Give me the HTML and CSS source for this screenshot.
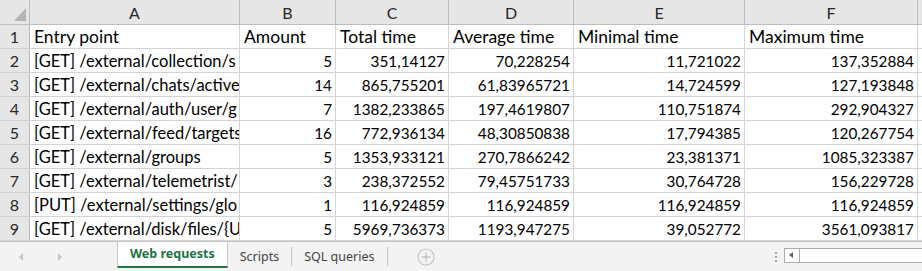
FILE: index.html
```html
<!DOCTYPE html>
<html lang="en">
<head>
    <meta charset="UTF-8">
    <title>Web requests</title>
    <link rel="stylesheet" href="styles.css">
</head>
<body>
    <div class="sheet">
        <div class="corner"><span class="corner-mark"></span></div>
        <div class="col-head">A</div>
        <div class="col-head">B</div>
        <div class="col-head">C</div>
        <div class="col-head">D</div>
        <div class="col-head">E</div>
        <div class="col-head">F</div>
        <div class="col-head edge"></div>

        <div class="row-head">1</div>
        <div class="cell">Entry point</div>
        <div class="cell">Amount</div>
        <div class="cell">Total time</div>
        <div class="cell">Average time</div>
        <div class="cell">Minimal time</div>
        <div class="cell">Maximum time</div>
        <div class="cell edge"></div>

        <div class="row-head">2</div>
        <div class="cell path">[GET] /external/collection/s</div>
        <div class="cell num">5</div>
        <div class="cell num">351,14127</div>
        <div class="cell num">70,228254</div>
        <div class="cell num">11,721022</div>
        <div class="cell num">137,352884</div>
        <div class="cell edge"></div>

        <div class="row-head">3</div>
        <div class="cell path">[GET] /external/chats/active</div>
        <div class="cell num">14</div>
        <div class="cell num">865,755201</div>
        <div class="cell num">61,83965721</div>
        <div class="cell num">14,724599</div>
        <div class="cell num">127,193848</div>
        <div class="cell edge"></div>

        <div class="row-head">4</div>
        <div class="cell path">[GET] /external/auth/user/g</div>
        <div class="cell num">7</div>
        <div class="cell num">1382,233865</div>
        <div class="cell num">197,4619807</div>
        <div class="cell num">110,751874</div>
        <div class="cell num">292,904327</div>
        <div class="cell edge"></div>

        <div class="row-head">5</div>
        <div class="cell path">[GET] /external/feed/targets</div>
        <div class="cell num">16</div>
        <div class="cell num">772,936134</div>
        <div class="cell num">48,30850838</div>
        <div class="cell num">17,794385</div>
        <div class="cell num">120,267754</div>
        <div class="cell edge"></div>

        <div class="row-head">6</div>
        <div class="cell path">[GET] /external/groups</div>
        <div class="cell num">5</div>
        <div class="cell num">1353,933121</div>
        <div class="cell num">270,7866242</div>
        <div class="cell num">23,381371</div>
        <div class="cell num">1085,323387</div>
        <div class="cell edge"></div>

        <div class="row-head">7</div>
        <div class="cell path">[GET] /external/telemetrist/</div>
        <div class="cell num">3</div>
        <div class="cell num">238,372552</div>
        <div class="cell num">79,45751733</div>
        <div class="cell num">30,764728</div>
        <div class="cell num">156,229728</div>
        <div class="cell edge"></div>

        <div class="row-head">8</div>
        <div class="cell path">[PUT] /external/settings/glo</div>
        <div class="cell num">1</div>
        <div class="cell num">116,924859</div>
        <div class="cell num">116,924859</div>
        <div class="cell num">116,924859</div>
        <div class="cell num">116,924859</div>
        <div class="cell edge"></div>

        <div class="row-head">9</div>
        <div class="cell path">[GET] /external/disk/files/{U</div>
        <div class="cell num">5</div>
        <div class="cell num">5969,736373</div>
        <div class="cell num">1193,947275</div>
        <div class="cell num">39,052772</div>
        <div class="cell num">3561,093817</div>
        <div class="cell edge"></div>
    </div>

    <footer class="tabbar">
        <div class="tab-nav">
            <span class="arrow left"></span>
            <span class="arrow right"></span>
        </div>
        <div class="tab active">Web requests</div>
        <div class="tab">Scripts</div>
        <div class="tab">SQL queries</div>
        <div class="add-sheet">
            <svg width="18" height="18" viewBox="0 0 18 18">
                <circle cx="9" cy="9" r="8" fill="none" stroke="#c3c3c3" stroke-width="1.2"/>
                <path d="M9 4.5v9M4.5 9h9" stroke="#c3c3c3" stroke-width="1.4"/>
            </svg>
        </div>
        <div class="spacer"></div>
        <div class="grip"><i></i><i></i><i></i></div>
        <div class="hscroll">
            <span class="hscroll-btn"></span>
        </div>
    </footer>
</body>
</html>
```

FILE: styles.css
```css
body {
    margin: 0;
    padding: 0;
    width: 922px;
    height: 271px;
    overflow: hidden;
    background-color: #fff;
    font-family: Lato, "Liberation Sans", sans-serif;
    color: #000;
}

.sheet {
    display: grid;
    grid-template-columns: 30px 210px 96px 113px 125px 171px 173px 4px;
    grid-template-rows: 25px repeat(9, 24px);
}

.sheet > div {
    box-sizing: border-box;
    overflow: hidden;
    white-space: nowrap;
}

.corner {
    position: relative;
    background-color: #e6e6e6;
    border-right: 1px solid #bdbdbd;
    border-bottom: 1px solid #bdbdbd;
}

.corner-mark {
    position: absolute;
    left: 14px;
    top: 8px;
    width: 12px;
    height: 13px;
    background-color: #b4b4b4;
    clip-path: polygon(100% 0, 100% 100%, 0 100%);
}

.col-head {
    background-color: #e6e6e6;
    border-right: 1px solid #bdbdbd;
    border-bottom: 1px solid #bdbdbd;
    color: #262626;
    font-size: 16px;
    text-align: center;
    line-height: 25px;
}

.row-head {
    background-color: #e6e6e6;
    border-right: 1px solid #bdbdbd;
    border-bottom: 1px solid #d0d0d0;
    color: #262626;
    font-size: 16px;
    text-align: center;
    line-height: 24px;
}

.cell {
    border-right: 1px solid #d4d4d4;
    border-bottom: 1px solid #d4d4d4;
    font-size: 17.5px;
    line-height: 22px;
    padding: 1px 3px 0 4px;
}

.cell.path {
    font-size: 16.5px;
    padding-right: 0;
}

.cell.num {
    font-size: 15.3px;
    text-align: right;
}

.edge {
    border-right: none;
}

.tabbar {
    display: flex;
    align-items: stretch;
    height: 30px;
    box-sizing: border-box;
    border-top: 1px solid #c6c6c6;
    background-color: #f3f3f3;
    font-family: "Noto Sans", "Open Sans", sans-serif;
    font-size: 12.5px;
}

.tab-nav {
    width: 117px;
    display: flex;
    align-items: center;
    gap: 35px;
    padding-left: 19px;
    box-sizing: border-box;
}

.arrow {
    width: 0;
    height: 0;
    border-top: 4px solid transparent;
    border-bottom: 4px solid transparent;
}

.arrow.left {
    border-right: 4px solid #c4c4c4;
}

.arrow.right {
    border-left: 4px solid #c4c4c4;
}

.tab {
    display: flex;
    align-items: center;
    padding: 0 12px;
    margin: 5px 0 5px;
    color: #444;
    border-right: 1px solid #c6c6c6;
}

.tab.active {
    margin: 0 0 3px;
    padding: 0 12px 1px 12px;
    background-color: #fff;
    border-left: 1px solid #c6c6c6;
    border-right: 1px solid #c6c6c6;
    border-bottom: 2px solid #217346;
    color: #217346;
    font-weight: bold;
}

.add-sheet {
    display: flex;
    align-items: center;
    padding-left: 29px;
}

.spacer {
    flex: 1;
}

.grip {
    display: flex;
    flex-direction: column;
    justify-content: center;
    gap: 2px;
    width: 16px;
    align-items: center;
}

.grip i {
    display: block;
    width: 2px;
    height: 2px;
    background-color: #a8a8a8;
}

.hscroll {
    width: 138px;
    margin: 6px 0 8px;
    box-sizing: border-box;
    border: 1px solid #ababab;
    border-right: none;
    background-color: #fff;
    display: flex;
}

.hscroll-btn {
    width: 14px;
    border-right: 1px solid #ababab;
    position: relative;
}

.hscroll-btn::before {
    content: "";
    position: absolute;
    left: 4px;
    top: 3px;
    border-top: 3px solid transparent;
    border-bottom: 3px solid transparent;
    border-right: 4px solid #606060;
}
```
